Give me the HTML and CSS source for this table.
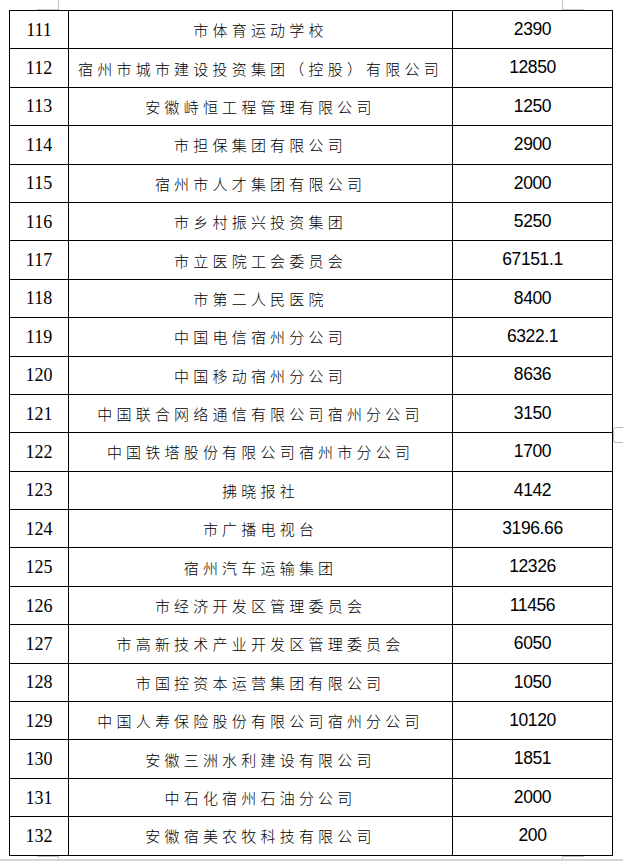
FILE: index.html
```html
<!DOCTYPE html>
<html lang="zh-CN">
<head>
<meta charset="utf-8">
<title>表格</title>
<link rel="stylesheet" href="styles.css">
</head>
<body>
<div class="page">
  <span class="mark mark-tl"></span>
  <span class="mark mark-tr"></span>
  <span class="mark mark-bl"></span>
  <span class="mark mark-br"></span>
  <span class="side-tab"></span>
  <table class="list">
    <colgroup><col class="c-no"><col class="c-name"><col class="c-amt"></colgroup>
    <tbody>
      <tr><td class="no">111</td><td class="name">市体育运动学校</td><td class="amt">2390</td></tr>
      <tr><td class="no">112</td><td class="name">宿州市城市建设投资集团（控股）有限公司</td><td class="amt">12850</td></tr>
      <tr><td class="no">113</td><td class="name">安徽峙恒工程管理有限公司</td><td class="amt">1250</td></tr>
      <tr><td class="no">114</td><td class="name">市担保集团有限公司</td><td class="amt">2900</td></tr>
      <tr><td class="no">115</td><td class="name">宿州市人才集团有限公司</td><td class="amt">2000</td></tr>
      <tr><td class="no">116</td><td class="name">市乡村振兴投资集团</td><td class="amt">5250</td></tr>
      <tr><td class="no">117</td><td class="name">市立医院工会委员会</td><td class="amt">67151.1</td></tr>
      <tr><td class="no">118</td><td class="name">市第二人民医院</td><td class="amt">8400</td></tr>
      <tr><td class="no">119</td><td class="name">中国电信宿州分公司</td><td class="amt">6322.1</td></tr>
      <tr><td class="no">120</td><td class="name">中国移动宿州分公司</td><td class="amt">8636</td></tr>
      <tr><td class="no">121</td><td class="name">中国联合网络通信有限公司宿州分公司</td><td class="amt">3150</td></tr>
      <tr><td class="no">122</td><td class="name">中国铁塔股份有限公司宿州市分公司</td><td class="amt">1700</td></tr>
      <tr><td class="no">123</td><td class="name">拂晓报社</td><td class="amt">4142</td></tr>
      <tr><td class="no">124</td><td class="name">市广播电视台</td><td class="amt">3196.66</td></tr>
      <tr><td class="no">125</td><td class="name">宿州汽车运输集团</td><td class="amt">12326</td></tr>
      <tr><td class="no">126</td><td class="name">市经济开发区管理委员会</td><td class="amt">11456</td></tr>
      <tr><td class="no">127</td><td class="name">市高新技术产业开发区管理委员会</td><td class="amt">6050</td></tr>
      <tr><td class="no">128</td><td class="name">市国控资本运营集团有限公司</td><td class="amt">1050</td></tr>
      <tr><td class="no">129</td><td class="name">中国人寿保险股份有限公司宿州分公司</td><td class="amt">10120</td></tr>
      <tr><td class="no">130</td><td class="name">安徽三洲水利建设有限公司</td><td class="amt">1851</td></tr>
      <tr><td class="no">131</td><td class="name">中石化宿州石油分公司</td><td class="amt">2000</td></tr>
      <tr><td class="no">132</td><td class="name">安徽宿美农牧科技有限公司</td><td class="amt">200</td></tr>
    </tbody>
  </table>
</div>
</body>
</html>
```

FILE: styles.css
```css
html, body {
  margin: 0;
  padding: 0;
  background: #ffffff;
}

.page {
  position: relative;
  width: 623px;
  height: 861px;
  overflow: hidden;
  padding: 10px 0 0 9px;
  box-sizing: border-box;
  border-bottom: 2px solid #d4d4d4;
}

.list {
  border-collapse: collapse;
  table-layout: fixed;
  width: 603px;
}

.c-no { width: 59px; }
.c-name { width: 384px; }
.c-amt { width: 160px; }

.list td {
  border: 1px solid #000000;
  height: 37.4px;
  padding: 0;
  text-align: center;
  vertical-align: middle;
  color: #000000;
  line-height: 1;
}

.no {
  font-family: "Liberation Serif", "Times New Roman", serif;
  font-size: 18px;
}

.name {
  font-family: "Noto Sans CJK SC", "Noto Sans", sans-serif;
  font-size: 15px;
  letter-spacing: 4.2px;
  font-weight: 300;
  color: #000000;
}

.amt {
  font-family: "Liberation Sans", Arial, sans-serif;
  font-size: 17.5px;
  letter-spacing: -0.4px;
}

.mark {
  position: absolute;
  border-color: #c4c4c4;
  border-style: solid;
  border-width: 0;
}

.mark-tl {
  left: 37px;
  top: 0;
  width: 21px;
  height: 9px;
  border-right-width: 1px;
  border-bottom-width: 1px;
}

.mark-tr {
  left: 562px;
  top: 0;
  width: 21px;
  height: 9px;
  border-left-width: 1px;
  border-bottom-width: 1px;
}

.mark-bl {
  left: 37px;
  top: 856px;
  width: 21px;
  height: 4px;
  border-right-width: 1px;
  border-top-width: 1px;
}

.mark-br {
  left: 562px;
  top: 856px;
  width: 21px;
  height: 4px;
  border-left-width: 1px;
  border-top-width: 1px;
}

.side-tab {
  position: absolute;
  left: 613px;
  top: 427px;
  width: 14px;
  height: 16px;
  border: 1px solid #b8b8b8;
  border-radius: 3px;
  box-sizing: border-box;
}
```
